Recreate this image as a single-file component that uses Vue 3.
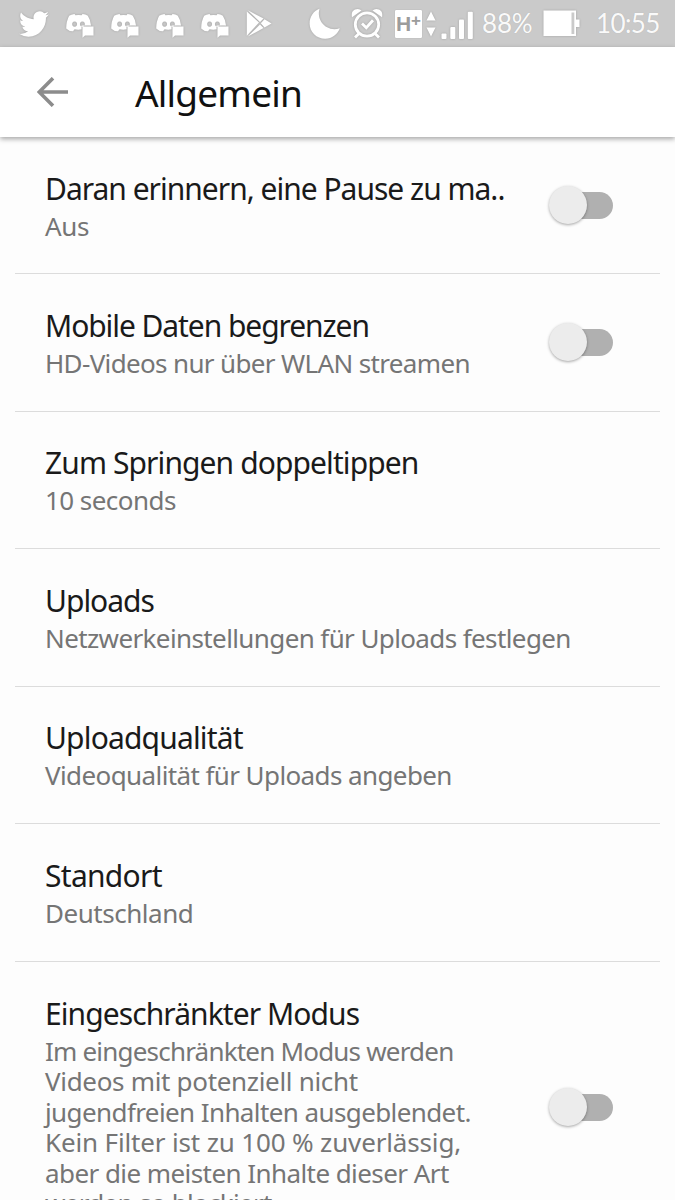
<script setup>
import { ref } from 'vue';

// tracking = letter spacing in px
const settings = ref([
  {
    title: 'Daran erinnern, eine Pause zu ma..',
    tracking: -1,
    lines: [{ text: 'Aus', tracking: -0.4 }],
    toggle: true,
    on: false
  },
  {
    title: 'Mobile Daten begrenzen',
    tracking: -1.07,
    lines: [{ text: 'HD-Videos nur über WLAN streamen', tracking: -0.65 }],
    toggle: true,
    on: false
  },
  {
    title: 'Zum Springen doppeltippen',
    tracking: -0.9,
    lines: [{ text: '10 seconds', tracking: -0.55 }]
  },
  {
    title: 'Uploads',
    tracking: -1,
    lines: [{ text: 'Netzwerkeinstellungen für Uploads festlegen', tracking: -0.61 }]
  },
  {
    title: 'Uploadqualität',
    tracking: -0.83,
    lines: [{ text: 'Videoqualität für Uploads angeben', tracking: -0.6 }]
  },
  {
    title: 'Standort',
    tracking: -0.7,
    lines: [{ text: 'Deutschland', tracking: -0.47 }]
  },
  {
    title: 'Eingeschränkter Modus',
    tracking: -0.92,
    lines: [
      { text: 'Im eingeschränkten Modus werden', tracking: -0.8 },
      { text: 'Videos mit potenziell nicht', tracking: -0.32 },
      { text: 'jugendfreien Inhalten ausgeblendet.', tracking: -0.6 },
      { text: 'Kein Filter ist zu 100 % zuverlässig,', tracking: -0.15 },
      { text: 'aber die meisten Inhalte dieser Art', tracking: -0.57 },
      { text: 'werden so blockiert.', tracking: -0.7 }
    ],
    toggle: true,
    on: false
  }
]);

const toggle = (item) => {
  if (item.toggle) item.on = !item.on;
};
</script>


<template>
  <div class="screen">
    <div class="status-bar">
      <div class="notifications">
        <svg class="twitter" width="30" height="26" viewBox="0 2 24 20" preserveAspectRatio="none">
          <path d="M23.95 4.57a10 10 0 0 1-2.82.77 4.96 4.96 0 0 0 2.16-2.72c-.95.55-2 .95-3.13 1.18a4.92 4.92 0 0 0-8.38 4.48C7.69 8.1 4.07 6.13 1.64 3.16a4.92 4.92 0 0 0 1.52 6.57 4.9 4.9 0 0 1-2.23-.61v.06a4.92 4.92 0 0 0 3.95 4.83 5 5 0 0 1-2.21.08 4.94 4.94 0 0 0 4.6 3.42A9.87 9.87 0 0 1 0 19.54a13.99 13.99 0 0 0 7.55 2.21c9.05 0 14-7.5 14-13.98 0-.21 0-.42-.02-.63a9.94 9.94 0 0 0 2.42-2.57z" />
        </svg>
        <svg v-for="n in 4" :key="n" class="discord" width="28" height="25" viewBox="0 0 28 25">
          <path fill-rule="evenodd" d="M8.5 1 Q5 1.400 3.200 2.800 Q0.300 8 0.200 15.500 Q3 18.400 7 18.300 L8.600 16.200 Q12 17 15.500 16.300 V12.500 H25 Q24.600 7 21.800 2.800 Q19.500 1.300 16.500 1 L15.600 2.300 Q12.500 1.900 9.400 2.300Z M8.600 8.400a2.500 2.700 0 1 0 .01 0Z M16.400 8.400a2.500 2.700 0 1 0 .01 0Z" />
          <path d="M16.500 13.500H27.500V22.500H19L16.500 24.800Z" />
        </svg>
        <svg width="26" height="27" viewBox="0 0 26 27">
          <path d="M.8 1.500 13 12.600.8 25.800Z" />
          <path d="M1.800.3 17.500 8.600 14 12ZM1.800 26.600 14 14.500 17.500 18ZM18.500 9.200 25.500 13.400 18.500 17.500 14.800 13.300Z" />
        </svg>
      </div>
      <div class="system">
        <svg width="32" height="32" viewBox="0 0 32 32">
          <path d="M10.500.8C7 12.500 17.500 24.500 30.800 20.300 28.500 26.500 23 30.800 16.300 30.800 7.500 30.800.6 24 .6 15.500.6 8.800 4.500 3 10.500.8Z" />
        </svg>
        <svg class="alarm" width="32" height="32" viewBox="0 0 32 32">
          <circle cx="16" cy="16.500" r="11.700" class="line" />
          <path d="m11 15.500 4.300 4.300 6.700-7.500M8 25.500 4 29.500M24 25.500l4 4" class="line" />
          <path d="M1 9.200Q-.2 3.500 4 1.500 8 .1 10.500 2.500ZM31 9.200Q32.200 3.500 28 1.500 24 .1 21.500 2.500Z" />
        </svg>
        <div class="hplus">
          <span>H</span><sup>+</sup>
        </div>
        <svg class="arrows" width="10" height="26" viewBox="0 0 10 26">
          <path d="M5 .5 9.500 9.500H.5ZM5 25.500.5 16.500H9.500Z" />
        </svg>
        <svg class="signal" width="33" height="29" viewBox="0 0 33 29">
          <rect x=".5" y="22.500" width="5" height="5.500" rx="1" />
          <rect x="9.300" y="16" width="5" height="12" rx="1" />
          <rect x="18" y="8.500" width="5" height="19.500" rx="1" />
          <rect x="26.800" y=".8" width="5" height="27.200" rx="1" />
        </svg>
        <span class="percent">88%</span>
        <svg class="battery" width="38" height="27" viewBox="0 0 38 27">
          <path d="M.5.500H33V9.500H36.500V17H33V26H.5Z" />
          <rect x="28.500" y="2.500" width="2.800" height="21.500" class="empty" />
        </svg>
        <span class="time">10:55</span>
      </div>
    </div>

    <div class="toolbar">
      <svg width="32" height="30" viewBox="0 0 32 30">
        <path d="M31 15H3M16 1.200 2.200 15 16 28.800" />
      </svg>
      <h1>Allgemein</h1>
    </div>

    <div class="list">
      <div v-for="item in settings" :key="item.title" class="row" @click="toggle(item)">
        <div class="text">
          <div class="title" :style="{ letterSpacing: item.tracking + 'px' }">{{ item.title }}</div>
          <div class="summary">
            <div v-for="line in item.lines" :key="line.text" :style="{ letterSpacing: line.tracking + 'px' }">
              {{ line.text }}
            </div>
          </div>
        </div>
        <div v-if="item.toggle" class="switch" :class="{ on: item.on }">
          <div class="thumb"></div>
        </div>
      </div>
    </div>
  </div>
</template>


<style>
body {
  margin: 0;
  overflow: hidden;
}
</style>

<style scoped>
.screen {
  width: 675px;
  height: 1200px;
  overflow: hidden;
  display: flex;
  flex-direction: column;
  background: #fdfdfd;
  font-family: "Noto Sans", sans-serif;
}

.status-bar {
  height: 47px;
  flex: none;
  display: flex;
  justify-content: space-between;
  background: #cacaca;
  color: #fff;
  box-sizing: border-box;
  padding: 0 14px 0 19px;
}

.status-bar svg {
  flex: none;
  fill: #fff;
  filter: drop-shadow(0 0 1px rgba(0, 0, 0, 0.2));
}

.notifications,
.system {
  display: flex;
  align-items: center;
}

.twitter {
  margin-right: 17px;
}

.discord {
  margin: 4px 17px 0 0;
}

.alarm {
  margin-left: 10px;
}

.alarm .line {
  fill: none;
  stroke: #fff;
  stroke-width: 2.8;
}

.hplus {
  width: 27px;
  height: 28px;
  margin-left: 12px;
  display: flex;
  justify-content: center;
  background: #fff;
  border-radius: 1px;
  color: #9c9c9c;
  font: bold 21px/28px "Liberation Sans", sans-serif;
  box-shadow: 0 0 1px rgba(0, 0, 0, 0.3);
}

.hplus sup {
  font-size: 17px;
  line-height: 21px;
}

.arrows {
  margin-left: 4px;
}

.signal {
  margin: 3px 0 0 5px;
}

.percent,
.time {
  font: 400 26px/47px Lato, sans-serif;
  color: rgba(255, 255, 255, 0.95);
  text-shadow: 0 0 1px rgba(0, 0, 0, 0.15);
}

.percent {
  width: 54px;
  margin-left: 8px;
  letter-spacing: -0.2px;
}

.battery {
  margin-left: 7px;
}

.battery .empty {
  fill: #cacaca;
}

.time {
  margin-left: 15px;
  width: 65px;
  letter-spacing: -0.6px;
}

.toolbar {
  height: 90px;
  flex: none;
  display: flex;
  align-items: center;
  background: #fff;
  box-sizing: border-box;
  padding-left: 37px;
  box-shadow: 0 2px 5px rgba(0, 0, 0, 0.35);
  z-index: 1;
}

.toolbar svg {
  fill: none;
  stroke: #8c8c8c;
  stroke-width: 3.6;
}

.toolbar h1 {
  margin: 1px 0 0 66px;
  font-size: 37px;
  line-height: 50px;
  font-weight: 400;
  letter-spacing: -0.8px;
  color: #111;
}

.list {
  padding: 0 15px;
}

.row {
  min-height: 137.5px;
  box-sizing: border-box;
  display: flex;
  align-items: center;
  justify-content: space-between;
  padding: 0 47px 0 30px;
  border-bottom: 1px solid #dcdcdc;
}

.row:first-child {
  min-height: 137px;
}

.text {
  white-space: nowrap;
  padding: 30px 0;
}

.row:last-child .text {
  padding: 32px 0 34px;
}

.title {
  font-size: 30px;
  line-height: 40px;
  color: #1a1a1a;
}

.summary {
  margin-top: 2px;
  font-size: 26px;
  line-height: 30.6px;
  color: #757575;
}

.switch {
  width: 54px;
  height: 27px;
  flex: none;
  display: flex;
  align-items: center;
  border-radius: 14px;
  background: #b0b0b0;
}

.thumb {
  width: 38px;
  height: 38px;
  flex: none;
  margin-left: -10px;
  border-radius: 50%;
  background: #ececec;
  box-shadow: 0 1px 3px rgba(0, 0, 0, 0.35);
}

.switch.on {
  background: #9dbdf0;
}

.switch.on .thumb {
  margin-left: 26px;
  background: #2a6de0;
}
</style>
